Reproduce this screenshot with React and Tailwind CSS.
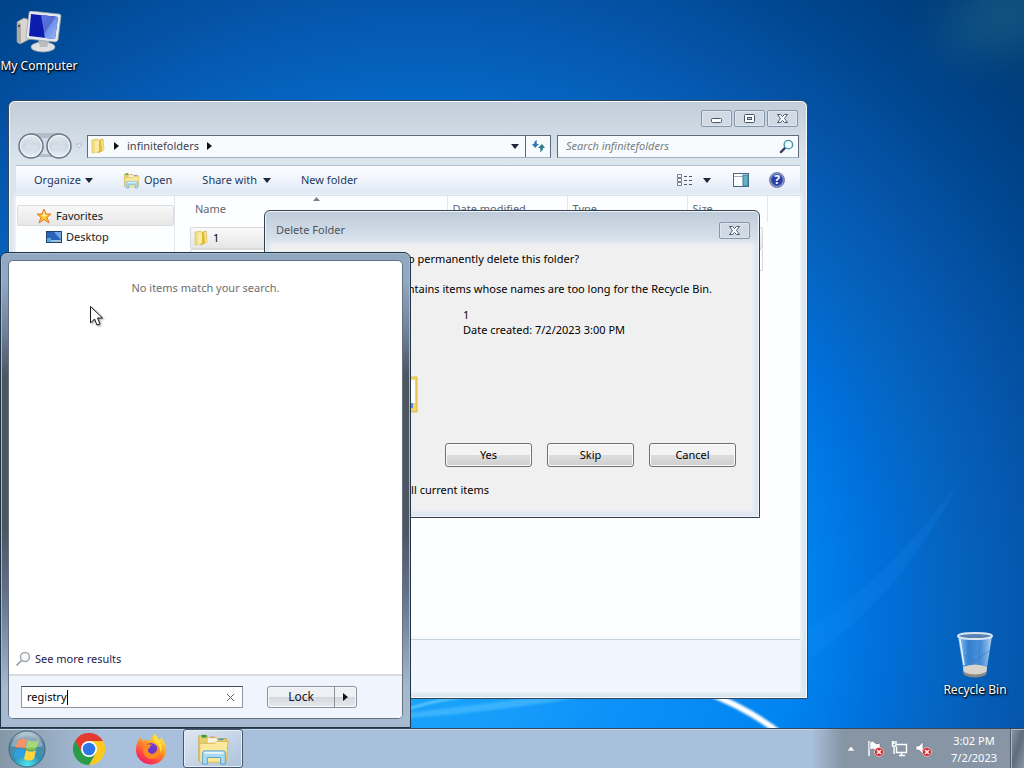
import React, { useState } from "react";

const columns = [
  { name: "Name", width: "w-[257px]" },
  { name: "Date modified", width: "w-[120px]" },
  { name: "Type", width: "w-[120px]" },
  { name: "Size", width: "w-[80px]" },
];

const files = [
  { name: "1", selected: true },
  { name: "2", selected: false },
];

function Wallpaper() {
  return (
    <svg className="absolute inset-0 h-full w-full" viewBox="0 0 1024 768" preserveAspectRatio="none">
      <defs>
        <filter id="soft" x="-100%" y="-100%" width="300%" height="300%"><feGaussianBlur stdDeviation="22" /></filter>
        <filter id="edge"><feGaussianBlur stdDeviation="1" /></filter>
      </defs>
      <path d="M930 50 L980 -20 L1060 -20 L1040 50 Z" fill="#3d8a96" opacity="0.3" filter="url(#soft)" />
      <path d="M790 640 Q880 590 960 480 Q900 600 800 665 Z" fill="#2a9bff" opacity="0.12" filter="url(#edge)" />
      <path d="M400 712 Q425 702 462 697" stroke="#6fd2ff" strokeWidth="2" fill="none" filter="url(#edge)" />
      <path d="M400 719 Q500 712 600 694 L560 694 Q480 704 400 714 Z" fill="#5cc6ff" opacity="0.5" filter="url(#edge)" />
      <path d="M700 690 Q750 708 786 738" stroke="#fff" strokeWidth="6" fill="none" filter="url(#edge)" />
    </svg>
  );
}

function ComputerIcon() {
  return (
    <svg width="48" height="44" viewBox="0 0 48 44">
      <defs>
        <linearGradient id="screen" x1="0" y1="0" x2="1" y2="1">
          <stop offset="0" stopColor="#1a2fd0" />
          <stop offset="0.45" stopColor="#0a17a0" />
          <stop offset="0.5" stopColor="#4a6ae0" />
          <stop offset="1" stopColor="#a5c8fa" />
        </linearGradient>
      </defs>
      <path d="M2 11 L9 7 L15 9 L15 28 L5 33 L2 31 Z" fill="#d9d6cf" stroke="#8f9092" strokeWidth="0.7" />
      <path d="M2 11 L6 13 L6 32 L2 31 Z" fill="#aaa9a5" />
      <circle cx="4" cy="15" r="1" fill="#333" />
      <ellipse cx="28" cy="36" rx="12" ry="5" fill="#dfe1e2" stroke="#9da4aa" strokeWidth="0.7" />
      <path d="M23 28 L34 30 L32 36 L25 36 Z" fill="#b9bec3" />
      <path d="M14 2 Q14 0 16 0 L44 3 Q46 3 46 5 L43 29 Q42 31 40 31 L13 28 Q11 28 11 26 Z" fill="#e4e8ec" stroke="#8c99a6" strokeWidth="0.7" />
      <path d="M16 3 L43 6 L40 28 L14 25 Z" fill="#0c1cae" />
      <path d="M26 4 L43 6 L40 28 L30 27 Z" fill="url(#screen)" />
      <path d="M26 4 L43 6 L40 28 L30 27 Z" fill="#8fb0f4" opacity="0.55" />
    </svg>
  );
}

function RecycleIcon() {
  return (
    <svg width="40" height="48" viewBox="0 0 40 48">
      <defs>
        <linearGradient id="glass" x1="0" y1="0" x2="1" y2="0">
          <stop offset="0" stopColor="#b9dcf8" stopOpacity="0.9" />
          <stop offset="0.3" stopColor="#4a8edc" stopOpacity="0.7" />
          <stop offset="0.7" stopColor="#6da6e6" stopOpacity="0.7" />
          <stop offset="1" stopColor="#c4e2fb" stopOpacity="0.9" />
        </linearGradient>
      </defs>
      <path d="M3 5 L9 43 Q20 49 31 43 L37 5 Z" fill="url(#glass)" />
      <path d="M8 36 Q20 31 32 36 L31 43 Q20 49 9 43 Z" fill="#d9d3ce" />
      <path d="M9 41 Q20 46 31 41 L31 44 Q20 49 9 44 Z" fill="#8f8985" />
      <path d="M15 10 L17 34 M25 10 L24 34 M9 24 L20 30 L34 20" stroke="#3478c4" strokeWidth="1" fill="none" opacity="0.6" />
      <path d="M5 8 L9 34" stroke="#e5f4ff" strokeWidth="1.5" />
      <ellipse cx="20" cy="5" rx="17" ry="3" fill="#5683b4" stroke="#d8e6f0" strokeWidth="2" />
    </svg>
  );
}

function FolderIcon() {
  return (
    <svg width="16" height="16" viewBox="0 0 16 16" className="shrink-0">
      <path d="M2 2 L8 1 L8 14 L2 15 Z" fill="#f3df83" stroke="#d6b84c" strokeWidth="0.6" />
      <path d="M7 3 L13 1 L14 12 L8 15 Z" fill="#e0bb37" stroke="#c9a538" strokeWidth="0.6" />
      <path d="M5 3 L9 2 L9 13 L5 15 Z" fill="#f9eda6" />
      <path d="M11 2 L13 2 L14 12 L12 13 Z" fill="#f6e28c" />
    </svg>
  );
}

function LibraryIcon({ size }) {
  return (
    <svg width={size} height={size} viewBox="0 0 36 36" className="shrink-0">
      <path d="M3 4 L12 4 L13 7 L32 7 L32 30 L3 30 Z" fill="#e9cf6b" stroke="#c8a848" />
      <rect x="6" y="3" width="5" height="3" fill="#2ea043" />
      <rect x="15" y="5" width="5" height="3" fill="#d8502c" />
      <rect x="24" y="7" width="5" height="3" fill="#4a92d0" />
      <path d="M12 6 H22 L23 9 H34 V12 H12 Z" fill="#f7f3e0" stroke="#d6bd68" strokeWidth="0.7" />
      <path d="M4 12 L20 12 L22 10 L34 10 L32 32 L4 32 Z" fill="#fbe99b" stroke="#d8b955" />
      <path d="M7 22 Q7 20 9 20 H29 Q31 20 31 22 V34 H26 V27 H12 V34 H7 Z" fill="#a9daf3" stroke="#579fcb" />
      <path d="M9 22 H29" stroke="#e8f8ff" strokeWidth="2" />
    </svg>
  );
}

function StarIcon() {
  return (
    <svg width="16" height="16" viewBox="0 0 16 16">
      <path d="M8 1 L10 6 L15 6 L11 9.500 L13 15 L8 11.500 L3 15 L5 9.500 L1 6 L6 6 Z" fill="#ffc52f" stroke="#e2792a" strokeWidth="1" />
      <path d="M8 3 L9.500 7 L12 7 L8 9 L5 7 L7 7 Z" fill="#ffed96" />
    </svg>
  );
}

function DesktopIcon() {
  return (
    <svg width="16" height="14" viewBox="0 0 16 14">
      <rect x="0.500" y="1.500" width="15" height="11" fill="#2b63b8" stroke="#1f4475" />
      <path d="M8 2 L15 2 L15 10 Z" fill="#6fa5e4" />
      <rect x="1" y="10" width="14" height="2" fill="#a0bfdd" />
      <rect x="1" y="8" width="4" height="4" fill="#5aa9dd" />
    </svg>
  );
}

function Magnifier({ lens, handle, size, weight }) {
  return (
    <svg width={size} height={size} viewBox="0 0 16 16" className="shrink-0">
      <path d="M7 9 L2 14" stroke={handle} strokeWidth={weight} strokeLinecap="round" />
      <circle cx="10" cy="6" r="4.500" fill="#f4fbff" stroke={lens} strokeWidth="1.500" />
    </svg>
  );
}

function NavButtons() {
  return (
    <div className="flex items-center">
      <svg width="56" height="28" viewBox="0 0 56 28">
        <defs>
          <linearGradient id="nav" x1="0" y1="0" x2="0" y2="1">
            <stop offset="0" stopColor="#e4eaf0" />
            <stop offset="0.5" stopColor="#ccd6df" />
            <stop offset="1" stopColor="#e9f1f7" />
          </linearGradient>
        </defs>
        <path d="M13 1 H42 V4 Q28 8 13 4 Z M14 25 Q28 19 42 25 Z" fill="#b2bfcb" />
        <circle cx="14" cy="14" r="12" fill="url(#nav)" stroke="#6c7884" strokeWidth="1.500" />
        <circle cx="42" cy="14" r="12" fill="url(#nav)" stroke="#6c7884" strokeWidth="1.500" />
        <circle cx="14" cy="14" r="10.500" fill="none" stroke="#f3f7fa" />
        <circle cx="42" cy="14" r="10.500" fill="none" stroke="#f3f7fa" />
        <path d="M7 15 L13 10 V13 H21 V17 H13 V20 Z M49 15 L43 10 V13 H35 V17 H43 V20 Z" fill="#d7e0e8" />
      </svg>
      <svg width="8" height="6" viewBox="0 0 8 6" className="ml-0.5">
        <path d="M1 1 H7 L4 5 Z" fill="#eef3f8" stroke="#a7b4c2" strokeWidth="0.8" />
      </svg>
    </div>
  );
}

function Arrow({ dir }) {
  return dir === "right" ? (
    <svg width="5" height="8" viewBox="0 0 5 8"><path d="M0 0 L5 4 L0 8 Z" fill="#111" /></svg>
  ) : (
    <svg width="8" height="5" viewBox="0 0 8 5"><path d="M0 0 H8 L4 5 Z" fill="#1c2738" /></svg>
  );
}

function CaptionButton({ type }) {
  return (
    <button
      aria-label={type}
      className="flex h-[17px] w-[31px] items-center justify-center rounded-[2px] border border-[#8594a8] bg-[#cfdae5] shadow-[inset_0_0_0_1px_#dde6ef]"
    >
      <svg width="13" height="11" viewBox="0 0 13 11">
        {type === "Minimize" && <rect x="1.500" y="5.500" width="10" height="4" rx="1" fill="#fff" stroke="#4c5568" />}
        {type === "Maximize" && (
          <>
            <rect x="1.500" y="1.500" width="10" height="8" rx="1" fill="#fff" stroke="#4c5568" />
            <rect x="4.500" y="4.500" width="4" height="2" fill="#cfdae5" stroke="#4c5568" />
          </>
        )}
        {type === "Close" && (
          <path
            d="M1.500 1.500 H4.500 L6.500 3.500 L8.500 1.500 H11.500 L8.500 5.500 L11.500 9.500 H8.500 L6.500 7.500 L4.500 9.500 H1.500 L4.500 5.500 Z"
            fill="#fff"
            stroke="#4c5568"
          />
        )}
      </svg>
    </button>
  );
}

function Explorer() {
  return (
    <section className="absolute top-[100px] left-[8px] flex h-[599px] w-[800px] flex-col rounded-t-[7px] border border-[#33475c] bg-[#dbe5ee] bg-linear-to-b from-[#c1cdd9] to-[#dbe5ee] to-[60px] px-[7px] pb-[6px] shadow-[inset_0_0_0_1px_#f4fafd]">
      <div className="flex justify-end gap-0.5 pt-[9px] pr-0.5">
        <CaptionButton type="Minimize" />
        <CaptionButton type="Maximize" />
        <CaptionButton type="Close" />
      </div>

      <div className="flex h-[38px] items-center pr-px pl-px">
        <NavButtons />
        <div className="ml-1 flex h-[23px] flex-1 items-center border border-[#5d6a7c] border-b-[#a3b0c0] bg-[#f8fbfe] pl-0.5 text-[#42454e]">
          <FolderIcon />
          <span className="ml-2"><Arrow dir="right" /></span>
          <button className="mx-2">infinitefolders</button>
          <Arrow dir="right" />
          <button aria-label="Previous locations" className="mr-1.5 ml-auto"><Arrow dir="down" /></button>
          <button aria-label="Refresh" className="flex h-full w-[25px] items-center justify-center border-l border-[#5d6a7c]">
            <svg width="15" height="14" viewBox="0 0 15 14">
              <path d="M6 1 Q3 2 3 5 H1 L4 9 L8 5 H6 Q5 3 6 1 Z" fill="#3477b5" />
              <path d="M9 13 Q12 12 12 9 H14 L11 5 L7 9 H9 Q10 11 9 13 Z" fill="#2d7f87" />
            </svg>
          </button>
        </div>
        <label className="ml-1.5 flex h-[23px] w-[242px] items-center border border-[#5d6a7c] border-b-[#a3b0c0] bg-[#f8fbfe] pr-1 pl-2">
          <input
            aria-label="Search infinitefolders"
            placeholder="Search infinitefolders"
            className="min-w-0 flex-1 bg-transparent italic outline-none placeholder:text-[#777b82]"
          />
          <Magnifier size={15} lens="#4197ad" handle="#38445c" weight="2.500" />
        </label>
      </div>

      <div className="flex h-[31px] items-center border-y border-[#b3c1d3] bg-linear-to-b from-[#fcfdff] via-[#eff4fc] to-[#dce6f4] pr-[15px] pb-px pl-[18px] text-[#1e395b]">
        <button className="flex items-center gap-1">Organize <Arrow dir="down" /></button>
        <button className="ml-[30px] flex items-center gap-1"><LibraryIcon size={17} />Open</button>
        <button className="ml-[30px] flex items-center gap-1.5">Share with <Arrow dir="down" /></button>
        <button className="ml-[30px]">New folder</button>
        <div className="ml-auto flex items-center">
          <button aria-label="Change view" className="flex items-center gap-2.5">
            <svg width="16" height="13" viewBox="0 0 16 13">
              <path d="M0.500 0.500 h4 v3 h-4 z M0.500 4.500 h4 v3 h-4 z M0.500 8.500 h4 v3 h-4 z" fill="#fff" stroke="#6f7e92" />
              <path d="M7 2.500 H10 M12 2.500 H15 M7 6.500 H10 M12 6.500 H15 M7 10.500 H10 M12 10.500 H15" stroke="#4b596d" />
            </svg>
            <Arrow dir="down" />
          </button>
          <button aria-label="Preview pane" className="ml-[22px]">
            <svg width="16" height="14" viewBox="0 0 16 14">
              <rect x="0.500" y="0.500" width="15" height="13" fill="#fdfeff" stroke="#4b6683" />
              <path d="M1 3.500 H10" stroke="#9db0c4" />
              <rect x="10" y="2" width="5" height="11" fill="#66b1c6" stroke="#3b7d98" />
            </svg>
          </button>
          <button aria-label="Help" className="ml-5 h-4 w-4 rounded-full border border-[#7c88a8] bg-[#2b3fa5] text-[12px] leading-[14px] font-bold text-white shadow-[inset_0_0_1px_1px_#9fb0dc]">?</button>
        </div>
      </div>

      <div className="flex min-h-0 flex-1 bg-[#fdfeff] shadow-[0_0_4px_1px_#f8fcff]">
        <nav className="w-[159px] border-r border-[#dfe6ee] pt-[9px] pl-px text-[#1a1a1a]">
          <a href="#favorites" className="flex h-[21px] items-center gap-1 rounded-[2px] border border-[#dcdcdc] bg-linear-to-b from-[#f8f8f8] to-[#e7e7e7] pl-[18px]">
            <StarIcon />Favorites
          </a>
          <a href="#desktop" className="flex h-[22px] items-center gap-1 pl-[29px]"><DesktopIcon />Desktop</a>
          <a href="#downloads" className="flex h-[22px] items-center gap-1 pl-[29px]"><FolderIcon />Downloads</a>
        </nav>
        <div className="relative flex-1 pl-[15px]">
          <svg width="7" height="4" viewBox="0 0 7 4" className="absolute top-px left-[138px]">
            <path d="M0 4 L3.500 0 L7 4 Z" fill="#75808c" />
          </svg>
          <table className="w-[577px] table-fixed border-collapse text-left">
            <thead>
              <tr>
                {columns.map((col) => (
                  <th key={col.name} className={`${col.width} h-[26px] border-r border-[#e3e8ee] pl-[5px] font-normal text-[#5f6672]`}>
                    {col.name}
                  </th>
                ))}
              </tr>
            </thead>
            <tbody>
              {files.map((file) => (
                <tr key={file.name} className="h-[22px]">
                  <td colSpan={4} className={file.selected ? "pt-[5px] pr-1" : "pr-1"}>
                    <div
                      className={
                        file.selected
                          ? "flex h-[22px] items-center gap-1 rounded-[2px] border border-[#d9d9d9] bg-linear-to-b from-[#fafafa] to-[#e6e6e6] pl-0.5"
                          : "flex h-[22px] items-center gap-1 rounded-[2px] border border-[#d9d9d9] pl-0.5"
                      }
                    >
                      <FolderIcon />{file.name}
                    </div>
                  </td>
                </tr>
              ))}
            </tbody>
          </table>
        </div>
      </div>
      <footer className="h-[53px] border-t border-[#cdd4dc] bg-[#f1f5fd] shadow-[0_0_4px_1px_#eef5fb]" />
    </section>
  );
}

function DialogButton({ children }) {
  return (
    <button className="h-[24px] w-[87px] rounded-[3px] border border-[#707070] bg-linear-to-b from-[#f3f3f3] from-50% via-[#dddddd] via-50% to-[#cfcfcf] shadow-[inset_0_0_0_1px_#fafafa]">
      {children}
    </button>
  );
}

function DeleteDialog() {
  return (
    <section className="absolute top-[210px] left-[264px] flex h-[308px] w-[496px] flex-col rounded-t-[6px] border border-[#33414f] bg-[#dbe4ee] bg-linear-to-b from-[#bdcad8] to-[#dde6ef] to-[34px] px-[7px] pb-[7px] shadow-[inset_0_0_0_1px_#eef4f9]">
      <header className="flex h-[34px] items-center justify-between pt-1 pr-0.5 pl-1 text-[#4b5462]">
        <h2>Delete Folder</h2>
        <CaptionButton type="Close" />
      </header>
      <div className="flex-1 bg-[#f0f0f0] text-black shadow-[0_0_4px_2px_#eef1f4]">
        <p className="mr-[173px] pt-1.5 text-right leading-4">Are you sure you want to permanently delete this folder?</p>
        <p className="mt-3.5 mr-10 text-right leading-4">The folder contains items whose names are too long for the Recycle Bin.</p>
        <div className="mt-2.5 flex h-[115px]">
          <div className="flex w-[190px] items-end justify-end pr-[43px] pb-2">
            <svg width="50" height="40" viewBox="0 0 50 40">
              <path d="M4 3 H48 V38 L4 36 Z" fill="#f1d467" stroke="#dcb843" />
              <path d="M8 6 H46 V29 H8 Z" fill="#fff" />
              <path d="M8 29 H44 V34 H8 Z" fill="#5a8fd8" />
            </svg>
          </div>
          <div className="pl-px leading-[15px]">
            <p>1</p>
            <p>Date created: 7/2/2023 3:00 PM</p>
          </div>
        </div>
        <div className="mt-[21px] mr-4 flex justify-end gap-[15px]">
          <DialogButton>Yes</DialogButton>
          <DialogButton>Skip</DialogButton>
          <DialogButton>Cancel</DialogButton>
        </div>
        <label className="mt-[15px] mr-[263px] flex items-center justify-end gap-1.5 leading-4">
          <input type="checkbox" />
          Do this for all current items
        </label>
      </div>
    </section>
  );
}

function StartMenu() {
  const [query, setQuery] = useState("registry");

  return (
    <section className="absolute bottom-[40px] left-0 h-[476px] w-[411px] rounded-t-[7px] border border-[#203448] bg-[linear-gradient(#90a8c2_6%,#6f7f98_17%,#4c5560_26%,#4c5560_58%,#63718a_72%,#a5b9d1_92%)] p-[7px] pb-[8px] shadow-[inset_0_0_0_1px_#a9b9c9]">
      <div className="flex h-full flex-col overflow-hidden rounded-[5px] border border-[#66727f] bg-white">
        <div className="flex-1 pt-[19px] text-center leading-4 text-[#6d6d6d]">No items match your search.</div>
        <a href="#more" className="flex h-[30px] items-center gap-1 pl-1.5 text-[#1f1a4d]">
          <Magnifier size={16} lens="#a4a8ac" handle="#8b8f94" weight="1.500" />
          See more results
        </a>
        <div className="flex h-[44px] items-center border-t-2 border-[#d5dae3] bg-[#f0f4fc] pl-3">
          <div className="relative flex h-[22px] w-[222px] items-center border border-[#8e959e] border-t-[#444b54] bg-white pr-2 pl-[5px]">
            <input
              aria-label="Search programs and files"
              value={query}
              onChange={(e) => setQuery(e.target.value)}
              className="min-w-0 flex-1 bg-transparent text-black outline-none"
            />
            <span className="absolute top-[3px] left-[45px] h-[15px] w-px bg-black" />
            <button aria-label="Clear" onClick={() => setQuery("")}>
              <svg width="7" height="7" viewBox="0 0 7 7"><path d="M0 0 L7 7 M7 0 L0 7" stroke="#5a6472" /></svg>
            </button>
          </div>
          <div className="ml-6 flex h-[22px] w-[90px] rounded-[3px] border border-[#8b929b] bg-linear-to-b from-[#eef0f3] from-50% via-[#d4d7dc] via-50% to-[#e6e9ee] shadow-[inset_0_0_0_1px_#f8f9fb]">
            <button className="flex-1 text-[12px] text-[#14162b]">Lock</button>
            <button aria-label="Shut down options" className="flex w-[22px] items-center justify-center border-l border-[#8b929b]"><Arrow dir="right" /></button>
          </div>
        </div>
      </div>
    </section>
  );
}

function StartOrb() {
  return (
    <svg width="38" height="38" viewBox="0 0 38 38">
      <defs>
        <radialGradient id="orb" cx="0.5" cy="0.95" r="0.95">
          <stop offset="0" stopColor="#4de8f0" />
          <stop offset="0.4" stopColor="#2f93ba" />
          <stop offset="0.8" stopColor="#5e869c" />
          <stop offset="1" stopColor="#c9d8e0" />
        </radialGradient>
      </defs>
      <circle cx="19" cy="19" r="18" fill="url(#orb)" stroke="#40637e" />
      <path d="M10 10 Q14 7 19 10 L17 19 Q12 15 7 19 Z" fill="#f06428" />
      <path d="M20 10 Q25 13 31 10 L28 19 Q23 22 18 19 Z" fill="#86c63e" />
      <path d="M7 20 Q12 17 17 20 L15 29 Q10 26 6 28 Z" fill="#2f9fe2" />
      <path d="M18 20 Q23 23 28 20 L26 29 Q21 32 16 29 Z" fill="#ffd53c" />
      <path d="M3 16 A16.500 16.500 0 0 1 35 16 Q19 20 3 16" fill="#fff" opacity="0.3" />
    </svg>
  );
}

function ChromeIcon() {
  return (
    <svg width="32" height="32" viewBox="0 0 32 32">
      <path d="M16 16 L2.140 8 A16 16 0 0 1 29.860 8 Z" fill="#e33b2e" />
      <path d="M16 8 H29.860 A16 16 0 0 1 16 32 L22.900 20 Z" fill="#fcc91f" />
      <path d="M9.100 20 L2.140 8 A16 16 0 0 0 16 32 L22.900 20 Z" fill="#2a9c48" />
      <path d="M9.100 20 L2.140 8 L16 8 Z" fill="#e33b2e" />
      <path d="M9.100 20 L2.140 8 L1 14 L4 24 Z" fill="#2a9c48" />
      <circle cx="16" cy="16" r="8" fill="#fff" />
      <circle cx="16" cy="16" r="6.300" fill="#2f77e8" />
    </svg>
  );
}

function FirefoxIcon() {
  return (
    <svg width="32" height="32" viewBox="0 0 32 32">
      <defs>
        <linearGradient id="fox" x1="0.8" y1="0" x2="0.2" y2="1">
          <stop offset="0" stopColor="#fff04a" />
          <stop offset="0.4" stopColor="#ff9a1f" />
          <stop offset="0.75" stopColor="#ff4144" />
          <stop offset="1" stopColor="#e5177b" />
        </linearGradient>
      </defs>
      <path d="M20 1 Q23 4 24 7 Q26 6 26 4 Q31 10 31 17 A15 14.500 0 0 1 1 17 Q1 9 6 4 Q6 7 8 8 Q11 6 15 8 Q17 3 20 1 Z" fill="url(#fox)" />
      <circle cx="16" cy="17" r="7" fill="#7340d8" />
      <path d="M8 13 Q12 10 17 12 Q19 15 15 15 Q12 17 14 19 Q18 22 22 17 Q24 11 19 8 Q26 10 26 17 Q24 26 16 26 Q7 25 8 13 Z" fill="#ff8a22" />
      <path d="M15 13 Q20 11 22 15 Q22 20 17 21 Q13 20 13 17 Q13 15 15 15 Z" fill="#6a3bc8" />
      <path d="M20 1 Q16 7 22 11 Q26 15 25 20 Q29 13 24 7 Q23 4 20 1 Z" fill="#ffdf40" />
    </svg>
  );
}

function Badge() {
  return (
    <g>
      <circle cx="12" cy="12" r="4.500" fill="#d92b2b" stroke="#f6dada" strokeWidth="0.7" />
      <path d="M10 10 L14 14 M14 10 L10 14" stroke="#fff" strokeWidth="1.400" />
    </g>
  );
}

function Taskbar() {
  return (
    <footer className="absolute inset-x-0 bottom-0 flex h-10 items-stretch border-t border-[#34485d] bg-[#a8c0dc] bg-linear-to-r from-[#8497a7] from-0% via-[#a8c0dc] via-10% to-[#a8c0dc] to-75% shadow-[inset_0_1px_0_#c6d6e6]">
      <button aria-label="Start" className="pl-2"><StartOrb /></button>
      <button aria-label="Google Chrome" className="ml-[27px]"><ChromeIcon /></button>
      <button aria-label="Firefox" className="ml-[30px]"><FirefoxIcon /></button>
      <button
        aria-label="Windows Explorer"
        className="ml-4 flex w-[60px] items-center justify-center rounded-[3px] border border-[#48596d] bg-linear-to-br from-[#dfe8f2] to-[#aec2da] shadow-[inset_0_0_0_1px_#e3edf6]"
      >
        <LibraryIcon size={34} />
      </button>
      <div className="ml-auto flex items-center bg-linear-to-r from-transparent to-[#8795a5] to-15% pl-9 text-white">
        <button aria-label="Show hidden icons">
          <svg width="8" height="5" viewBox="0 0 8 5"><path d="M0 5 L4 0 L8 5 Z" fill="#fff" stroke="#5c6977" strokeWidth="0.5" /></svg>
        </button>
        <svg width="17" height="17" viewBox="0 0 17 17" className="ml-3">
          <path d="M2 1 V16" stroke="#fff" strokeWidth="1.500" />
          <path d="M3 2 Q6 0 8 3 Q10 5 13 3 V10 Q10 12 8 10 Q6 8 3 10 Z" fill="#fff" stroke="#5c6977" strokeWidth="0.5" />
          <Badge />
        </svg>
        <svg width="17" height="17" viewBox="0 0 17 17" className="ml-[7px]">
          <path d="M5 4.500 H15.500 V12.500 H5.500 V7 M8 15.500 H14 M10.500 13 V15 M3 7 V14 M1.500 1 V6 H5 V1 M3 1 V4" stroke="#fff" strokeWidth="1.400" fill="none" />
        </svg>
        <svg width="17" height="17" viewBox="0 0 17 17" className="ml-[7px]">
          <path d="M1 6 H4 L8 2 V14 L4 10 H1 Z" fill="#fff" stroke="#5c6977" strokeWidth="0.5" />
          <Badge />
        </svg>
        <div className="ml-2 w-[68px] text-center text-[11px] leading-[17px]">
          <div>3:02 PM</div>
          <div>7/2/2023</div>
        </div>
        <button aria-label="Show desktop" className="ml-0.5 h-full w-[14px] border-l border-[#4e5b69] bg-linear-to-br from-[#8d9aa8] via-[#5e6c7b] to-[#8998a8] shadow-[inset_1px_1px_0_#aab7c4]" />
      </div>
    </footer>
  );
}

export default function App() {
  return (
    <main className="relative h-screen min-h-[768px] overflow-hidden bg-[radial-gradient(circle_at_41%_80%,#23aefc_0px,#0d90f8_220px,#0084f0_380px,#0070dc_460px,#0564c0_530px,#0556ac_610px,#00458e_720px,#003c78_820px)] font-['Noto_Sans','Open_Sans',sans-serif] text-[11px] leading-4">
      <Wallpaper />
      <button className="absolute top-[11px] left-0 flex w-[78px] flex-col items-center gap-[3px] whitespace-nowrap text-[12px] text-white [text-shadow:0_1px_2px_#000,1px_1px_2px_#000]">
        <ComputerIcon />
        My Computer
      </button>
      <button className="absolute right-[4px] bottom-[70px] flex w-[90px] flex-col items-center gap-[3px] whitespace-nowrap text-[12px] text-white [text-shadow:0_1px_2px_#000,1px_1px_2px_#000]">
        <RecycleIcon />
        Recycle Bin
      </button>

      <Explorer />
      <DeleteDialog />
      <StartMenu />
      <Taskbar />

      <svg width="18" height="22" viewBox="0 0 18 22" className="absolute top-[305px] left-[89px] drop-shadow-[1px_1px_1px_#0006]">
        <path d="M1.500 1.500 V18 L5.500 14 L8 20 L11 19 L8.500 13 H13.500 Z" fill="#fff" stroke="#1b1b1b" />
      </svg>
    </main>
  );
}
